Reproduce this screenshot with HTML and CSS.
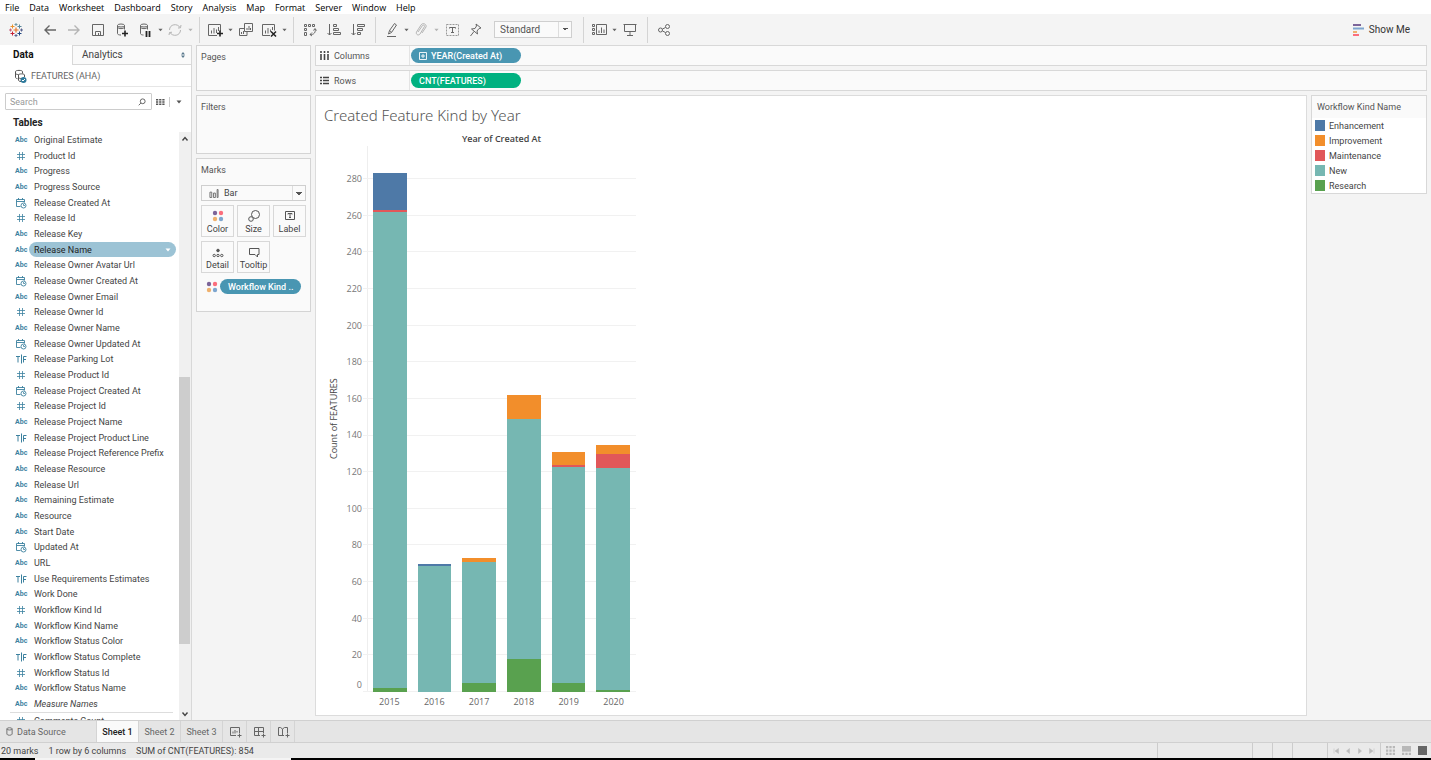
FILE: index.html
```html
<!DOCTYPE html>
<html lang="en">
<head>
    <meta charset="UTF-8">
    <meta name="viewport" content="width=device-width, initial-scale=1.0">
    <title>Created Feature Kind by Year</title>
    <link rel="stylesheet" href="styles.css">
</head>
<body>
    <!-- shared icons -->
    <svg class="sprite" aria-hidden="true">
        <symbol id="date" viewBox="0 0 12 12">
            <path d="M5.5 9.5h-4v-7h8v3M1.500 4.500h8M3.500 1v2M7.500 1v2" fill="none" stroke="currentColor" stroke-width=".9"/>
            <circle cx="8.500" cy="8.500" r="2.500" fill="none" stroke="currentColor" stroke-width=".9"/>
            <path d="M8.500 7v1.500h1.500" fill="none" stroke="currentColor" stroke-width=".8"/>
        </symbol>
        <symbol id="num" viewBox="0 0 12 12">
            <path d="M4.500 2v8M7.500 2v8M2 4.500h8M2 7.500h8" fill="none" stroke="currentColor" stroke-width=".8"/>
        </symbol>
        <symbol id="bool" viewBox="0 0 12 12">
            <path d="M1 3.500h4M3 3.500v6M6.500 1.500v9M8.500 9.500v-6h3M8.500 6.500h2.500" fill="none" stroke="currentColor"/>
        </symbol>
        <symbol id="dots" viewBox="0 0 12 12">
            <circle cx="3" cy="3" r="2.200" fill="#7c6599"/>
            <circle cx="9" cy="3" r="2.200" fill="#fb6e7c"/>
            <circle cx="3" cy="9" r="2.200" fill="#efb16d"/>
            <circle cx="9" cy="9" r="2.200" fill="#7ea6cf"/>
        </symbol>
        <symbol id="caret" viewBox="0 0 6 4">
            <path d="M.5.5h5L3 3.500z" fill="currentColor"/>
        </symbol>
    </svg>

    <nav class="menu">
        <button>File</button>
        <button>Data</button>
        <button>Worksheet</button>
        <button>Dashboard</button>
        <button>Story</button>
        <button>Analysis</button>
        <button>Map</button>
        <button>Format</button>
        <button>Server</button>
        <button>Window</button>
        <button>Help</button>
    </nav>

    <div class="toolbar">
        <button class="tool" aria-label="Start">
            <svg viewBox="0 0 16 16"><path d="M8 5.500v5M5.500 8h5" stroke="#e8762d" stroke-width="1.200"/><path d="M4.500 2.500v4M2.500 4.500h4" stroke="#eb912c"/><path d="M11.500 2.500v4M9.500 4.500h4" stroke="#59879b"/><path d="M4.500 9.500v4M2.500 11.500h4" stroke="#c72035"/><path d="M11.500 9.500v4M9.500 11.500h4" stroke="#1f447e"/><path d="M8 1v3M6.500 2.500h3" stroke="#7199a6"/><path d="M8 12v3M6.500 13.500h3" stroke="#5b6591"/><path d="M2.500 6.500v3M1 8h3" stroke="#c4637a"/><path d="M13.500 6.500v3M12 8h3" stroke="#5b6591"/></svg>
        </button>
        <span class="sep"></span>
        <button class="tool" aria-label="Undo"><svg viewBox="0 0 16 16"><path d="M14 8H3M7.500 3.500 3 8l4.500 4.500" stroke-width="1.400"/></svg></button>
        <button class="tool dim" aria-label="Redo"><svg viewBox="0 0 16 16"><path d="M2 8h11M8.500 3.500 13 8l-4.500 4.500" stroke-width="1.400"/></svg></button>
        <button class="tool" aria-label="Save"><svg viewBox="0 0 16 16"><path d="M2.500 2.500h11v11h-11zM5.500 13v-3.500h5V13M8.500 11v2"/></svg></button>
        <button class="tool" aria-label="New data source"><svg viewBox="0 0 16 16"><ellipse cx="7" cy="3.500" rx="3.500" ry="1.500"/><path d="M3.500 3.500v8c0 1 1.500 1.500 3.500 1.500M10.500 3.500v4M3.500 5.500c1.500 1.500 5.500 1.500 7 0"/><path d="M11 8.500v6M8 11.500h6" stroke="#222" stroke-width="1.600"/></svg></button>
        <button class="tool drop" aria-label="Pause updates"><svg viewBox="0 0 16 16"><ellipse cx="7" cy="3.500" rx="3.500" ry="1.500"/><path d="M3.500 3.500v8c0 1 1.500 1.500 3 1.500M10.500 3.500v4M3.500 5.500c1.500 1.500 5.500 1.500 7 0"/><path d="M9.500 9v6M12.500 9v6" stroke="#222" stroke-width="1.800"/></svg></button>
        <button class="caret" aria-label="Pause options"><svg><use href="#caret"/></svg></button>
        <button class="tool drop dim" aria-label="Run update"><svg viewBox="0 0 16 16"><path d="M2.500 8c0-6 8-7 10.500-2.500M13.500 8c0 6-8 7-10.500 2.500M11 6l2.500-.2.500-2.800M5 10.200 2.500 10.500 2 13"/></svg></button>
        <button class="caret dim" aria-label="Run options"><svg><use href="#caret"/></svg></button>
        <span class="sep"></span>
        <button class="tool drop" aria-label="New worksheet"><svg viewBox="0 0 16 16"><path d="M10 13.500H1.500v-11h12v7M4.500 8.500v3M7 6v5.500M9.500 7.500V11M11.500 5v4"/><path d="M13 8.500v6M10 11.500h6" stroke="#222" stroke-width="1.600"/></svg></button>
        <button class="caret" aria-label="New options"><svg><use href="#caret"/></svg></button>
        <button class="tool" aria-label="Duplicate"><svg viewBox="0 0 16 16"><path d="M6.500 9.500v-8h8v8zM6.500 6.500h-5v7h7.500v-4M9 6v2M11 4v4M12.500 6v2M3.500 10v2M5.500 9v3"/></svg></button>
        <button class="tool drop" aria-label="Clear sheet"><svg viewBox="0 0 16 16"><path d="M9 13.500H1.500v-11h12v6M4.500 8.500v3M7 6v5.500M9.500 7.500V10M11.500 5v3"/><path d="m10 9.500 5 5M15 9.500l-5 5" stroke="#222" stroke-width="1.500"/></svg></button>
        <button class="caret" aria-label="Clear options"><svg><use href="#caret"/></svg></button>
        <span class="sep"></span>
        <button class="tool" aria-label="Swap rows and columns"><svg viewBox="0 0 16 16"><path d="M2.500 2.500h2v2h-2zM6.500 2.500h2v2h-2zM10.500 2.500h2v2h-2zM2.500 6.500h2v2h-2zM2.500 10.500h2v3h-2zM13 7c1 3-1 6-5 5.500M11.500 8.500 13 6.500l1.500 2M10 10.500l-2 2 2 1.500"/></svg></button>
        <button class="tool" aria-label="Sort ascending"><svg viewBox="0 0 16 16"><path d="M3.500 2v11M1.500 11l2 2 2-2M7.500 2.500h3v2h-3zM7.500 6.500h5v2h-5zM7.500 10.500h7v2h-7z"/></svg></button>
        <button class="tool" aria-label="Sort descending"><svg viewBox="0 0 16 16"><path d="M3.500 2v11M1.500 11l2 2 2-2M7.500 2.500h7v2h-7zM7.500 6.500h5v2h-5zM7.500 10.500h3v2h-3z"/></svg></button>
        <span class="sep"></span>
        <button class="tool drop" aria-label="Highlight"><svg viewBox="0 0 16 16"><path d="m5.500 12 1-3.500 5-7 2 1.500-5 7.500zM6.500 8.500l2 1.500M4 14.500h9"/></svg></button>
        <button class="caret" aria-label="Highlight options"><svg><use href="#caret"/></svg></button>
        <button class="tool drop dim" aria-label="Group members"><svg viewBox="0 0 16 16"><path d="m5 10 4.500-6.500c1-1 2.500 0 2 1L7 12c-1.500 2-4.500.5-3.500-2L8 3c2-3 6-.5 5 2l-4 6"/></svg></button>
        <button class="caret dim" aria-label="Group options"><svg><use href="#caret"/></svg></button>
        <button class="tool" aria-label="Show mark labels"><svg viewBox="0 0 16 16"><path d="M2.500 2.500h12v11h-12z" stroke-dasharray="2 1" stroke="#999"/><path d="M5.500 6.500v-1h6v1M8.500 5.500v5M7 10.500h3"/></svg></button>
        <button class="tool" aria-label="Fix axes"><svg viewBox="0 0 16 16"><path d="m8 2 5 4-2 .5-2 2.500.5 3L3.500 7l3.500-.5L8.500 4zM6 9.500 2.500 14"/></svg></button>
        <select class="fit" aria-label="Fit">
            <option>Standard</option>
            <option>Fit Width</option>
            <option>Fit Height</option>
            <option>Entire View</option>
        </select>
        <span class="sep"></span>
        <button class="tool drop" aria-label="Show cards"><svg viewBox="0 0 16 16"><path d="M1.500 2.500h2v2h-2zM1.500 6.500h2v2h-2zM1.500 10.500h2v2h-2zM5.500 2.500h10v10h-10zM8 8.500v2.500M10.500 5.500V11M13 7.500V11"/></svg></button>
        <button class="caret" aria-label="Card options"><svg><use href="#caret"/></svg></button>
        <button class="tool" aria-label="Presentation mode"><svg viewBox="0 0 16 16"><path d="M1.500 2.500h13M2.500 3v6.500h11V3M8 9.500v4M5 13.500h6"/></svg></button>
        <span class="sep"></span>
        <button class="tool" aria-label="Share"><svg viewBox="0 0 16 16"><circle cx="4.500" cy="8" r="2"/><circle cx="11.500" cy="4.500" r="2"/><circle cx="11.500" cy="11.500" r="2"/><path d="m6.500 7 3-1.500M6.500 9l3 1.500"/></svg></button>
        <button class="show-me">
            <svg viewBox="0 0 12 12"><path d="M0 1h8" stroke="#7c6599" stroke-width="2"/><path d="M0 4.500h11" stroke="#7ea6cf" stroke-width="2"/><path d="M0 8h4" stroke="#efb16d" stroke-width="2"/><path d="M0 11h6" stroke="#fb6e7c" stroke-width="2"/></svg>
            Show Me
        </button>
    </div>

    <main class="workspace">
        <aside class="data-pane">
            <div class="pane-tabs">
                <button class="pane-tab active">Data</button>
                <button class="pane-tab">Analytics <svg viewBox="0 0 6 8"><path d="M3 1 5 3.500H1zM3 7 5 4.500H1z" fill="#59788c"/></svg></button>
            </div>
            <div class="source">
                <svg viewBox="0 0 14 14"><path d="M9.500 4.500v-2c0-1.500-7-1.500-7 0v6c0 .5 1 1 2 1.200M2.500 4.500c1 1 2 1 3 1" fill="none" stroke="#555"/><path d="M11.500 8V6c0-1.500-6-1.500-6 0v5c0 1 1 1.500 2.500 1.500M5.500 8.500c1 1 2 1 3 1" fill="none" stroke="#555"/><circle cx="10.500" cy="11" r="3" fill="#2f7a9c"/><path d="m9 11 1 1 2-2" fill="none" stroke="#fff"/></svg>
                FEATURES (AHA)
            </div>
            <div class="search-row">
                <div class="search">
                    <input type="text" placeholder="Search" aria-label="Search">
                    <svg viewBox="0 0 9 9"><circle cx="5.300" cy="3.700" r="2.700"/><path d="M3.300 5.700.8 8.200"/></svg>
                </div>
                <button class="view" aria-label="View"><svg viewBox="0 0 10 8"><path d="M0 1.500h10M0 4h10M0 6.500h10" stroke="#555" stroke-width="1.500" stroke-dasharray="2.500 1"/></svg></button>
                <button class="view-menu" aria-label="Pane menu"><svg><use href="#caret"/></svg></button>
            </div>
            <h2>Tables</h2>
            <div class="field-area">
                <div class="field-list">
                    <ul class="fields">
                        <li><b>Abc</b>Original Estimate</li>
                        <li><svg><use href="#num"/></svg>Product Id</li>
                        <li><b>Abc</b>Progress</li>
                        <li><b>Abc</b>Progress Source</li>
                        <li><svg><use href="#date"/></svg>Release Created At</li>
                        <li><svg><use href="#num"/></svg>Release Id</li>
                        <li><b>Abc</b>Release Key</li>
                        <li class="selected"><b>Abc</b><span>Release Name <svg><use href="#caret"/></svg></span></li>
                        <li><b>Abc</b>Release Owner Avatar Url</li>
                        <li><svg><use href="#date"/></svg>Release Owner Created At</li>
                        <li><b>Abc</b>Release Owner Email</li>
                        <li><svg><use href="#num"/></svg>Release Owner Id</li>
                        <li><b>Abc</b>Release Owner Name</li>
                        <li><svg><use href="#date"/></svg>Release Owner Updated At</li>
                        <li><svg><use href="#bool"/></svg>Release Parking Lot</li>
                        <li><svg><use href="#num"/></svg>Release Product Id</li>
                        <li><svg><use href="#date"/></svg>Release Project Created At</li>
                        <li><svg><use href="#num"/></svg>Release Project Id</li>
                        <li><b>Abc</b>Release Project Name</li>
                        <li><svg><use href="#bool"/></svg>Release Project Product Line</li>
                        <li><b>Abc</b>Release Project Reference Prefix</li>
                        <li><b>Abc</b>Release Resource</li>
                        <li><b>Abc</b>Release Url</li>
                        <li><b>Abc</b>Remaining Estimate</li>
                        <li><b>Abc</b>Resource</li>
                        <li><b>Abc</b>Start Date</li>
                        <li><svg><use href="#date"/></svg>Updated At</li>
                        <li><b>Abc</b>URL</li>
                        <li><svg><use href="#bool"/></svg>Use Requirements Estimates</li>
                        <li><b>Abc</b>Work Done</li>
                        <li><svg><use href="#num"/></svg>Workflow Kind Id</li>
                        <li><b>Abc</b>Workflow Kind Name</li>
                        <li><b>Abc</b>Workflow Status Color</li>
                        <li><svg><use href="#bool"/></svg>Workflow Status Complete</li>
                        <li><svg><use href="#num"/></svg>Workflow Status Id</li>
                        <li><b>Abc</b>Workflow Status Name</li>
                        <li><b>Abc</b><i>Measure Names</i></li>
                    </ul>
                    <ul class="fields measures">
                        <li><svg><use href="#num"/></svg>Comments Count</li>
                    </ul>
                </div>
                <div class="scrollbar">
                    <svg viewBox="0 0 8 6"><path d="m1.500 4.500 2.500-3 2.500 3"/></svg>
                    <div class="track"><div class="thumb"></div></div>
                    <svg viewBox="0 0 8 6"><path d="m1.500 1.500 2.500 3 2.500-3"/></svg>
                </div>
            </div>
        </aside>

        <section class="cards">
            <div class="card pages"><h3>Pages</h3></div>
            <div class="card filters"><h3>Filters</h3></div>
            <div class="card marks">
                <h3>Marks</h3>
                <div class="mark-type">
                    <svg viewBox="0 0 12 10"><path d="M1.500 3.500h2v6h-2zM5.500 4.500h2v5h-2zM9.500.5h1v9h-1z" fill="none" stroke="#666"/></svg>
                    <select aria-label="Mark type">
                        <option>Bar</option>
                        <option>Line</option>
                        <option>Area</option>
                    </select>
                </div>
                <div class="mark-grid">
                    <button><svg viewBox="0 0 12 12"><use href="#dots"/></svg>Color</button>
                    <button><svg viewBox="0 0 12 12"><circle cx="7.500" cy="4.500" r="4"/><circle cx="3" cy="9" r="2.300" fill="#fafafa"/></svg>Size</button>
                    <button><svg viewBox="0 0 12 12"><path d="M1.500 1.500h9v8h-9zM4 4.500v-1h4v1M6 3.500v4M5 7.500h2"/></svg>Label</button>
                    <button><svg viewBox="0 0 12 12"><circle cx="6" cy="4.500" r="1.300" fill="#555"/><circle cx="2.200" cy="9.500" r="1.200"/><circle cx="6" cy="9.500" r="1.200"/><circle cx="9.800" cy="9.500" r="1.200"/></svg>Detail</button>
                    <button><svg viewBox="0 0 12 12"><path d="M1.500 2.500h9.500v6H9.500v2.500L7 8.500H1.500z"/></svg>Tooltip</button>
                </div>
                <div class="mark-pill">
                    <svg viewBox="0 0 12 12"><use href="#dots"/></svg>
                    <button class="pill blue">Workflow Kind ..</button>
                </div>
            </div>
        </section>

        <section class="sheet">
            <div class="shelf">
                <div class="shelf-name"><svg viewBox="0 0 9 9"><path d="M1 0v9M4.500 0v9M8 0v9" stroke="#444" stroke-width="1.600"/><path d="M0 2.500h9" stroke="#fafafa"/></svg>Columns</div>
                <button class="pill blue"><svg viewBox="0 0 8 8"><path d="M.5.5h7v7h-7zM2 4h4M4 2v4" fill="none" stroke="#fff" stroke-width=".9"/></svg>YEAR(Created At)</button>
            </div>
            <div class="shelf">
                <div class="shelf-name"><svg viewBox="0 0 9 9"><path d="M0 1.500h9M0 4.500h9M0 7.500h9" stroke="#444" stroke-width="1.400"/><path d="M2.500 0v9" stroke="#fafafa"/></svg>Rows</div>
                <button class="pill green">CNT(FEATURES)</button>
            </div>
            <div class="view-row">
                <div class="canvas">
                    <h1>Created Feature Kind by Year</h1>
                    <div class="chart">
                        <div class="axis-title">Count of FEATURES</div>
                        <div class="axis">
                            <div class="tick top">280</div>
                            <div class="tick">260</div>
                            <div class="tick">240</div>
                            <div class="tick">220</div>
                            <div class="tick">200</div>
                            <div class="tick">180</div>
                            <div class="tick">160</div>
                            <div class="tick">140</div>
                            <div class="tick">120</div>
                            <div class="tick">100</div>
                            <div class="tick">80</div>
                            <div class="tick">60</div>
                            <div class="tick">40</div>
                            <div class="tick">20</div>
                            <div class="tick zero">0</div>
                        </div>
                        <div class="plot-col">
                            <h4>Year of Created At</h4>
                            <div class="plot">
                                <div class="gridlines">
                                    <i class="top"></i><i></i><i></i><i></i><i></i><i></i><i></i><i></i><i></i><i></i><i></i><i></i><i></i><i></i><i></i>
                                </div>
                                <div class="bar">
                                    <div class="enhancement" style="--n:20"></div>
                                    <div class="maintenance" style="--n:1"></div>
                                    <div class="new" style="--n:260"></div>
                                    <div class="research" style="--n:2"></div>
                                </div>
                                <div class="bar">
                                    <div class="enhancement" style="--n:1"></div>
                                    <div class="new" style="--n:69"></div>
                                </div>
                                <div class="bar">
                                    <div class="improvement" style="--n:2"></div>
                                    <div class="new" style="--n:66"></div>
                                    <div class="research" style="--n:5"></div>
                                </div>
                                <div class="bar">
                                    <div class="improvement" style="--n:13"></div>
                                    <div class="new" style="--n:131"></div>
                                    <div class="research" style="--n:18"></div>
                                </div>
                                <div class="bar">
                                    <div class="improvement" style="--n:7"></div>
                                    <div class="maintenance" style="--n:1"></div>
                                    <div class="new" style="--n:118"></div>
                                    <div class="research" style="--n:5"></div>
                                </div>
                                <div class="bar">
                                    <div class="improvement" style="--n:5"></div>
                                    <div class="maintenance" style="--n:8"></div>
                                    <div class="new" style="--n:121"></div>
                                    <div class="research" style="--n:1"></div>
                                </div>
                            </div>
                            <div class="years">
                                <span>2015</span><span>2016</span><span>2017</span><span>2018</span><span>2019</span><span>2020</span>
                            </div>
                        </div>
                    </div>
                </div>
                <div class="legend">
                    <h3>Workflow Kind Name</h3>
                    <ul>
                        <li><span class="enhancement"></span>Enhancement</li>
                        <li><span class="improvement"></span>Improvement</li>
                        <li><span class="maintenance"></span>Maintenance</li>
                        <li><span class="new"></span>New</li>
                        <li><span class="research"></span>Research</li>
                    </ul>
                </div>
            </div>
        </section>
    </main>

    <div class="sheet-tabs">
        <button class="data-source"><svg viewBox="0 0 8 10"><ellipse cx="4" cy="2" rx="3" ry="1.300"/><path d="M1 2v6c0 1.700 6 1.700 6 0V2"/></svg>Data Source</button>
        <button class="active">Sheet 1</button>
        <button>Sheet 2</button>
        <button>Sheet 3</button>
        <button class="add" aria-label="New worksheet"><svg viewBox="0 0 12 12"><path d="M7 9.500H1.500v-8h9V7M4 5.500v2M6 4v3.500M8 5v1.500M10.500 7.500v4M8.500 9.500h4"/></svg></button>
        <button class="add" aria-label="New dashboard"><svg viewBox="0 0 12 12"><path d="M7 9.500H1.500v-8h9V7M1.500 5.500h9M5.500 1.500v8M10.500 7.500v4M8.500 9.500h4"/></svg></button>
        <button class="add" aria-label="New story"><svg viewBox="0 0 12 12"><path d="M7 9.500H1.500v-8h2l2 1.500 2-1.500h3V7M5.500 3v6.500M10.500 7.500v4M8.500 9.500h4"/></svg></button>
    </div>

    <footer class="status">
        <span>20 marks</span>
        <span>1 row by 6 columns</span>
        <span>SUM of CNT(FEATURES): 854</span>
        <div class="status-boxes">
            <div class="box wide"></div>
            <div class="box"></div>
            <div class="box"></div>
            <div class="box mid"></div>
            <div class="box pager">
                <button aria-label="First"><svg viewBox="0 0 6 6"><path d="M1 .5v5M5.500.5v5L2 3z"/></svg></button>
                <button aria-label="Previous"><svg viewBox="0 0 6 6"><path d="M4.500.5v5L1.500 3z"/></svg></button>
                <button aria-label="Next"><svg viewBox="0 0 6 6"><path d="M1.500.5v5L4.500 3z"/></svg></button>
                <button aria-label="Last"><svg viewBox="0 0 6 6"><path d="M.5.5v5L4 3zM5 .5v5"/></svg></button>
            </div>
            <div class="box views">
                <button aria-label="Show tabs"><svg viewBox="0 0 8 8"><path d="M0 1h8M0 4h8M0 7h8" stroke="#b8b8b8" stroke-width="2" stroke-dasharray="2 1"/></svg></button>
                <button aria-label="Show filmstrip"><svg viewBox="0 0 8 8"><path d="M0 0h8v5H0z" fill="#b8b8b8"/><path d="M0 7h8" stroke="#b8b8b8" stroke-width="2" stroke-dasharray="2 1"/></svg></button>
                <button aria-label="Show sheet sorter"><svg viewBox="0 0 8 8"><path d="M0 0h8v8H0z" fill="#666"/></svg></button>
            </div>
        </div>
    </footer>
    <div class="taskbar"><span></span></div>
</body>
</html>
```
FILE: styles.css
```css
* {
    box-sizing: border-box;
}
body {
    margin: 0;
    height: 100vh;
    display: flex;
    flex-direction: column;
    overflow: hidden;
    font-family: Roboto, "Liberation Sans", sans-serif;
    font-size: 9px;
    line-height: 14px;
    color: #444;
    background: #f4f4f4;
}
h1, h2, h3, h4, ul {
    margin: 0;
    padding: 0;
    font-size: 9px;
    font-weight: normal;
    list-style: none;
}
button, select, input {
    font: inherit;
    color: inherit;
    margin: 0;
    padding: 0;
    border: none;
    background: none;
}
svg {
    display: block;
    flex: none;
}
.sprite {
    width: 0;
    height: 0;
    position: absolute;
}

/* menu */
.menu {
    display: flex;
    gap: 10px;
    height: 14px;
    padding: 1px 0 0 5px;
    background: #fff;
    font-family: "Open Sans", sans-serif;
    color: #000;
}

/* toolbar */
.toolbar {
    display: flex;
    align-items: center;
    height: 31px;
    padding: 0 21px 0 4px;
    color: #666;
}
.tool {
    width: 24px;
    height: 24px;
    display: flex;
    align-items: center;
    justify-content: center;
}
.tool svg {
    width: 16px;
    height: 16px;
    fill: none;
    stroke: currentColor;
}
.drop {
    width: 22px;
}
.caret {
    width: 8px;
    display: flex;
    justify-content: center;
}
.caret svg {
    width: 5px;
    height: 4px;
}
.dim {
    color: #b4b4b4;
}
.sep {
    width: 1px;
    height: 26px;
    margin: 0 4px 0 5px;
    background: #d4d4d4;
}
select {
    appearance: none;
    border: 1px solid #cfcfcf;
    background: linear-gradient(#ddd, #ddd) right 12px top / 1px 100% no-repeat,
        conic-gradient(from -45deg at 50% 100%, #555 90deg, transparent 0) right 3px center / 6px 3px no-repeat, #fafafa;
}
.fit {
    width: 78px;
    height: 17px;
    margin: 0 6px;
    padding-left: 5px;
    font-size: 10px;
    color: #555;
}
.show-me {
    margin-left: auto;
    display: flex;
    align-items: center;
    gap: 4px;
    font-size: 10px;
    color: #333;
}
.show-me svg {
    width: 12px;
    height: 12px;
}

/* main area */
.workspace {
    flex: 1;
    min-height: 0;
    display: flex;
}
.data-pane {
    width: 192px;
    flex: none;
    display: flex;
    flex-direction: column;
    background: #fff;
    border-right: 1px solid #d8d8d8;
}
.pane-tabs {
    display: flex;
    height: 20px;
}
.pane-tab {
    flex: 1;
    display: flex;
    align-items: center;
    justify-content: space-between;
    padding: 0 5px 0 9px;
    font-size: 10px;
    background: #fafafa;
    border: 1px solid #d8d8d8;
    border-width: 1px 0 1px 1px;
}
.pane-tab.active {
    flex: none;
    width: 72px;
    padding-left: 13px;
    font-weight: bold;
    color: #111;
    background: #fff;
    border: none;
}
.pane-tab svg {
    width: 6px;
    height: 8px;
}
.source {
    display: flex;
    align-items: center;
    gap: 4px;
    height: 22px;
    padding-left: 13px;
    color: #666;
    border-bottom: 1px solid #e6e6e6;
}
.source svg {
    width: 14px;
    height: 14px;
}
.search-row {
    display: flex;
    align-items: center;
    margin-top: 6px;
    padding-left: 5px;
}
.search {
    display: flex;
    align-items: center;
    width: 147px;
    height: 17px;
    padding: 0 5px 0 4px;
    border: 1px solid #ccc;
    border-radius: 1px;
}
.search input {
    flex: 1;
    min-width: 0;
}
.search input::placeholder {
    color: #999;
}
.search svg {
    width: 8px;
    height: 8px;
    fill: none;
    stroke: #555;
}
.view {
    padding: 1px 4px;
    border-right: 1px solid #ccc;
}
.view svg {
    width: 9px;
    height: 8px;
}
.view-menu {
    padding-left: 6px;
    color: #555;
}
.view-menu svg {
    width: 6px;
    height: 4px;
}
.data-pane h2 {
    padding-left: 13px;
    margin: 6px 0 2px;
    font-size: 10px;
    font-weight: bold;
    color: #222;
}
.field-area {
    flex: 1;
    min-height: 0;
    display: flex;
}
.field-list {
    flex: 1;
    display: flex;
    flex-direction: column;
    overflow: hidden;
}
.fields {
    flex: 1;
    display: flex;
    flex-direction: column;
}
.fields li {
    flex: 1;
    min-height: 0;
    display: flex;
    align-items: center;
    padding-left: 15px;
    white-space: nowrap;
}
.fields b {
    width: 19px;
    font-size: 7px;
    color: #3c819f;
}
.fields li > svg {
    width: 12px;
    height: 12px;
    margin-right: 7px;
    color: #3c819f;
}
.fields .selected span {
    flex: 1;
    display: flex;
    align-items: center;
    justify-content: space-between;
    margin: 0 3px 0 -5px;
    padding: 0 5px;
    height: 15px;
    border-radius: 8px;
    color: #222;
    background: #9cc3d5;
}
.selected span svg {
    width: 6px;
    height: 4px;
    color: #fff;
}
.measures {
    flex: none;
    height: 8px;
    margin: 0 6px 0 10px;
    border-top: 1px solid #ddd;
    overflow: hidden;
}
.measures li {
    flex: none;
    height: 16px;
    padding-left: 5px;
}
.scrollbar {
    width: 12px;
    display: flex;
    flex-direction: column;
    align-items: center;
    padding: 4px 1px 3px 0;
    background: #f0f0f0;
}
.scrollbar svg {
    width: 8px;
    height: 6px;
    fill: none;
    stroke: #444;
    stroke-width: 1.4;
}
.track {
    flex: 1;
    align-self: stretch;
    padding-top: 235px;
}
.thumb {
    height: 80%;
    background: #cdcdcd;
}

/* cards */
.cards {
    width: 115px;
    flex: none;
    margin-left: 4px;
    display: flex;
    flex-direction: column;
    gap: 4px;
}
.card {
    padding: 4px;
    background: #fafafa;
    border: 1px solid #d4d4d4;
}
.card h3 {
    color: #555;
}
.pages {
    height: 46px;
}
.filters {
    height: 59px;
}
.marks {
    height: 154px;
}
.mark-type {
    position: relative;
    margin-top: 8px;
}
.mark-type svg {
    position: absolute;
    left: 7px;
    top: 4px;
    width: 12px;
    height: 9px;
}
.mark-type select {
    display: block;
    width: 105px;
    height: 16px;
    padding-left: 22px;
}
.mark-grid {
    display: grid;
    grid-template-columns: repeat(3, 33px);
    gap: 4px 3px;
    margin-top: 4px;
}
.mark-grid button {
    height: 32px;
    display: flex;
    flex-direction: column;
    align-items: center;
    justify-content: flex-end;
    border: 1px solid #d8d8d8;
}
.mark-grid svg {
    width: 12px;
    height: 12px;
    fill: none;
    stroke: #555;
}
.mark-grid use {
    stroke: none;
}
.mark-pill {
    display: flex;
    align-items: center;
    gap: 2px;
    margin: 6px 0 0 5px;
}
.mark-pill > svg {
    width: 12px;
    height: 12px;
}
.pill {
    display: flex;
    align-items: center;
    gap: 4px;
    height: 15px;
    padding: 0 8px;
    border-radius: 8px;
    font-weight: 500;
    color: #fff;
    white-space: nowrap;
}
.blue {
    background: #4996b2;
}
.green {
    background: #00b180;
}
.pill svg {
    width: 8px;
    height: 8px;
}

/* shelves and sheet */
.sheet {
    flex: 1;
    min-width: 0;
    display: flex;
    flex-direction: column;
    gap: 4px;
    padding: 0 4px 4px;
}
.shelf {
    display: flex;
    align-items: center;
    height: 21px;
    background: #fafafa;
    border: 1px solid #d8d8d8;
}
.shelf .pill {
    width: 110px;
    margin-left: 1px;
}
.shelf-name {
    display: flex;
    align-items: center;
    gap: 5px;
    width: 94px;
    height: 100%;
    padding-left: 4px;
    color: #555;
    border-right: 1px solid #e4e4e4;
}
.shelf-name svg {
    width: 9px;
    height: 9px;
}
.view-row {
    flex: 1;
    min-height: 0;
    display: flex;
    align-items: flex-start;
    gap: 4px;
}
.canvas {
    flex: 1;
    align-self: stretch;
    display: flex;
    flex-direction: column;
    padding: 9px 8px 3px;
    background: #fff;
    border: 1px solid #dcdcdc;
}
.canvas h1 {
    font-family: "Noto Sans", "Open Sans", sans-serif;
    font-weight: 300;
    font-size: 15px;
    line-height: 20px;
    color: #555;
}
.chart {
    flex: 1;
    display: flex;
    font-family: "Open Sans", sans-serif;
}
.axis-title {
    writing-mode: vertical-rl;
    transform: rotate(180deg);
    width: 20px;
    padding-right: 4px;
    text-align: center;
    line-height: 12px;
}
.axis {
    display: flex;
    flex-direction: column;
    width: 23px;
    padding: 21px 5px 20px 0;
    color: #777;
}
.tick {
    flex: 20 0 0;
    min-height: 0;
    display: flex;
    align-items: flex-end;
    justify-content: flex-end;
    margin-bottom: -7px;
    padding-top: 7px;
}
.top {
    flex-grow: 18;
}
/* keep the origin label above the baseline */
.axis .zero {
    margin-bottom: 0;
    padding-top: 0;
}
.plot-col {
    width: 269px;
    display: flex;
    flex-direction: column;
}
.plot-col h4 {
    height: 21px;
    padding-top: 7px;
    font-weight: 600;
    text-align: center;
}
.plot {
    position: relative;
    flex: 1;
    display: flex;
    border-left: 1px solid #eee;
}
.gridlines {
    position: absolute;
    inset: 0 0 0 -5px;
    display: flex;
    flex-direction: column;
}
.gridlines i {
    flex: 20 0 0;
    border-bottom: 1px solid #f1f1f1;
}
.gridlines .top {
    flex-grow: 18;
}
.bar {
    position: relative;
    flex: 1;
    display: flex;
    flex-direction: column;
    justify-content: flex-end;
    padding: 0 6px 0 5px;
}
.bar div {
    height: calc(var(--n) / 298 * 100%);
    min-height: 2px;
}
.years {
    display: flex;
    height: 20px;
    padding-top: 3px;
    color: #666;
}
.years span {
    flex: 1;
    text-align: center;
}
.enhancement {
    background: #4e79a7;
}
.improvement {
    background: #f28e2b;
}
.maintenance {
    background: #e15759;
}
.new {
    background: #76b7b2;
}
.research {
    background: #59a14f;
}

/* legend */
.legend {
    width: 116px;
    flex: none;
    background: #fff;
    border: 1px solid #d8d8d8;
}
.legend h3 {
    height: 22px;
    padding: 4px 5px;
    color: #555;
    background: #fafafa;
}
.legend li {
    display: flex;
    align-items: center;
    gap: 4px;
    height: 15px;
    padding-left: 3px;
}
.legend span {
    width: 10px;
    height: 11px;
}

/* sheet tabs */
.sheet-tabs {
    display: flex;
    height: 23px;
    border: 1px solid #d0d0d0;
    border-width: 1px 0;
    background: #e5e5e5;
    color: #666;
}
.sheet-tabs button {
    width: 42px;
    border-right: 1px solid #d4d4d4;
}
.sheet-tabs .data-source {
    display: flex;
    align-items: center;
    gap: 4px;
    width: 97px;
    padding-left: 6px;
}
.sheet-tabs .active {
    color: #222;
    font-weight: 500;
    background: #fafafa;
}
.sheet-tabs .add {
    width: 24px;
    display: flex;
    align-items: center;
    justify-content: center;
}
.sheet-tabs svg {
    width: 7px;
    height: 9px;
    fill: none;
    stroke: #666;
    overflow: visible;
}
.sheet-tabs .add svg {
    width: 12px;
    height: 12px;
}

/* status bar */
.status {
    display: flex;
    align-items: center;
    gap: 10px;
    height: 15px;
    padding-left: 1px;
    background: #eaeaea;
}
.status-boxes {
    display: flex;
    height: 100%;
    margin-left: auto;
}
.box {
    display: flex;
    align-items: center;
    width: 20px;
    border-left: 1px solid #ccc;
}
.wide {
    width: 95px;
}
.mid {
    width: 35px;
}
.pager {
    width: 53px;
    padding-left: 5px;
    gap: 6px;
}
.pager svg {
    width: 6px;
    height: 6px;
    fill: #bbb;
    stroke: #bbb;
    stroke-width: .5;
}
.views {
    width: 51px;
    padding-left: 5px;
    gap: 7px;
}
.views svg {
    width: 9px;
    height: 9px;
}
.taskbar {
    height: 2px;
    padding-left: 35px;
    background: #000;
}
.taskbar span {
    display: block;
    width: 256px;
    height: 2px;
    background: #f4f4f4;
}
```
